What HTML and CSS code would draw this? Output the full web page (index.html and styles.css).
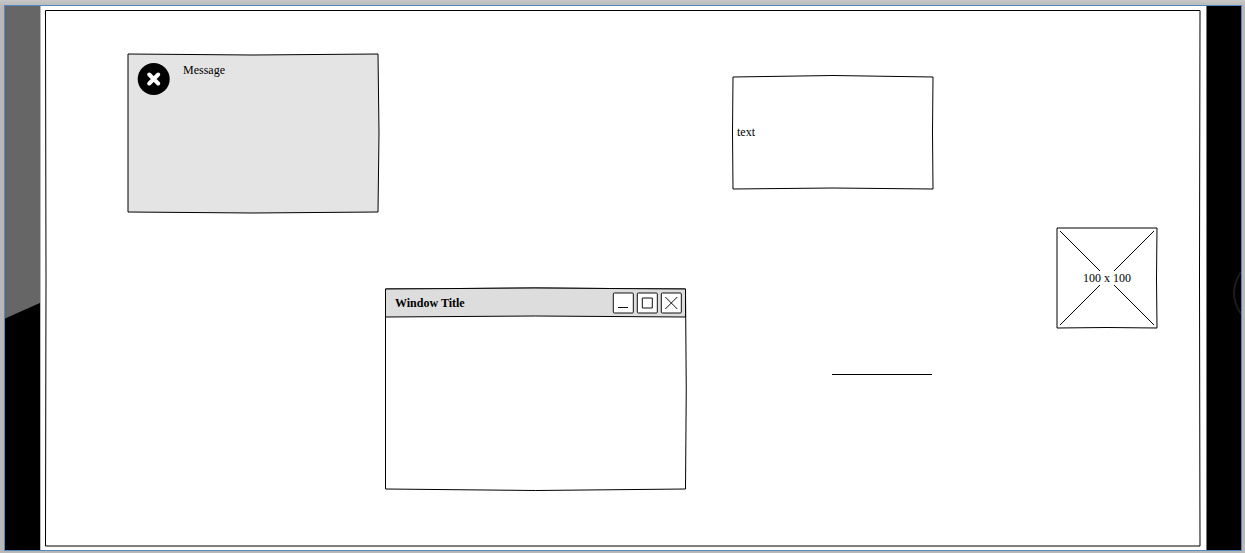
FILE: index.html
```
<!DOCTYPE html>
<html lang="en">
<head>
<meta charset="utf-8">
<title>Wireframe canvas</title>
<link rel="stylesheet" href="styles.css">
</head>
<body>
<div class="frame">
  <div class="strip strip-left"></div>
  <main class="canvas">
    <svg class="sheet" viewBox="0 0 1155 536" preserveAspectRatio="none" aria-hidden="true">
      <path d="M0.500 0.500H1155L1154.500 268L1155 536H0.500L1 268Z"/>
    </svg>

    <section class="node message">
      <svg class="outline" viewBox="0 0 250 158" aria-hidden="true">
        <path class="fill-message" d="M0 0Q125 2 250 0Q252 79 250 158Q125 160 0 158Z"/>
      </svg>
      <svg class="error-icon" viewBox="0 0 32 32" aria-hidden="true">
        <circle cx="15.700" cy="16" r="16"/>
        <path d="M11.200 11.500L20.200 20.500M20.200 11.500L11.200 20.500"/>
      </svg>
      <p class="message-text">Message</p>
    </section>

    <section class="node text-box">
      <svg class="outline" viewBox="0 0 200 112" aria-hidden="true">
        <path d="M0 0Q100 -3 200 0Q199 56 200 112Q100 110 0 112Q-1 56 0 0Z"/>
      </svg>
      <span>text</span>
    </section>

    <section class="node image-box">
      <svg class="outline" viewBox="0 0 100 100" aria-hidden="true">
        <path d="M0 0H100Q99 50 100 100Q50 99 0 100Z"/>
        <path d="M3 3L97 97M97 3L3 97"/>
      </svg>
      <span class="image-size">100 x 100</span>
    </section>

    <section class="node window">
      <svg class="outline" viewBox="0 0 300 200" aria-hidden="true">
        <path class="fill-white" d="M0.500 0Q150 -2 300.500 0Q302 100 300.500 200Q150 203 0.500 200Z"/>
        <path class="fill-title" d="M0.500 0Q150 -2 300.500 0V28Q150 26 0.500 28Z"/>
      </svg>
      <header class="title-bar">
        <h1 class="title">Window Title</h1>
        <button class="control" type="button" aria-label="Minimize">
          <svg viewBox="0 0 22 22"><rect x="1.300" y="1" width="20" height="20" rx="1"/><path d="M6 15.500H16"/></svg>
        </button>
        <button class="control" type="button" aria-label="Maximize">
          <svg viewBox="0 0 22 22"><rect x="1.300" y="1" width="20" height="20" rx="1"/><path d="M6.300 6H16.300V16H6.300Z"/></svg>
        </button>
        <button class="control" type="button" aria-label="Close">
          <svg viewBox="0 0 22 22"><rect x="1.300" y="1" width="20" height="20" rx="1"/><path d="M5.300 5L17.300 17M17.300 5L5.300 17"/></svg>
        </button>
      </header>
    </section>

    <div class="node rule"></div>
  </main>
  <div class="strip strip-right">
    <svg class="arc" viewBox="0 0 8 48" aria-hidden="true"><path d="M8 3Q-6 24 8 45"/></svg>
  </div>
</div>
</body>
</html>
```
FILE: styles.css
```
* {
  box-sizing: border-box;
}

body {
  margin: 0;
  min-height: 100vh;
  display: flex;
  padding: 5px 3px 2px 4px;
  background: linear-gradient(#c8c8c8, #b8b8b8 6px, #b8b8b8);
  color: #000;
  font: 12px/14px "Liberation Serif", serif;
}

.frame {
  flex: 1;
  display: flex;
  border: 1px solid #5489bd;
}

.strip {
  background: #000;
}

.strip-left {
  flex: 0 0 36px;
  background: linear-gradient(156deg, #666 0 285px, #000 286px);
  border-right: 1px solid #b8b8b8;
}

.strip-right {
  flex: 0 0 35px;
  display: flex;
  align-items: center;
  justify-content: flex-end;
  border-left: 1px solid #777;
}

.arc {
  width: 8px;
  height: 48px;
  margin-top: 30px;
  overflow: hidden;
  fill: none;
  stroke: #1c1c1c;
  stroke-width: 2;
}

.canvas {
  flex: 1;
  position: relative;
  display: flex;
  padding: 4px 6px 4px 4px;
  background: #fff;
}

.sheet {
  flex: 1;
  min-width: 0;
  width: 100%;
  height: auto;
  overflow: visible;
  fill: none;
  stroke: #000;
}

.sheet path {
  vector-effect: non-scaling-stroke;
}

.node {
  position: absolute;
}

.outline {
  position: absolute;
  inset: 0;
  width: 100%;
  height: 100%;
  overflow: visible;
  fill: none;
  stroke: #000;
  stroke-width: 1;
  stroke-linejoin: round;
}

.fill-message {
  fill: #e4e4e4;
}

.fill-title {
  fill: #ddd;
}

.fill-white {
  fill: #fff;
}

.message {
  left: 87px;
  top: 48px;
  width: 250px;
  height: 158px;
  display: flex;
  gap: 13px;
  padding: 9px 10px;
}

.error-icon {
  position: relative;
  width: 32px;
  height: 32px;
  overflow: visible;
}

.error-icon path {
  stroke: #fff;
  stroke-width: 4;
  stroke-linecap: round;
}

.message-text {
  position: relative;
  margin: 0;
}

.text-box {
  left: 692px;
  top: 71px;
  width: 200px;
  height: 112px;
  display: flex;
  align-items: center;
  padding: 0 4px 2px;
}

.image-box {
  left: 1016px;
  top: 222px;
  width: 100px;
  height: 100px;
  display: flex;
  align-items: center;
  justify-content: center;
}

.image-size {
  position: relative;
  background: #fff;
}

.window {
  left: 344px;
  top: 283px;
  width: 300px;
  height: 200px;
}

.title-bar {
  position: relative;
  display: flex;
  align-items: center;
  gap: 2px;
  height: 28px;
  padding: 0 3px 0 10px;
}

.title {
  flex: 1;
  margin: 0;
  font-size: 12px;
  line-height: 14px;
}

.control {
  display: block;
  width: 22px;
  height: 22px;
  padding: 0;
  border: 0;
  background: none;
}

.control svg {
  display: block;
  width: 22px;
  height: 22px;
  overflow: visible;
  fill: #fff;
  stroke: #111;
}

.rule {
  left: 791px;
  top: 368px;
  width: 100px;
  height: 1px;
  background: #000;
}
```
